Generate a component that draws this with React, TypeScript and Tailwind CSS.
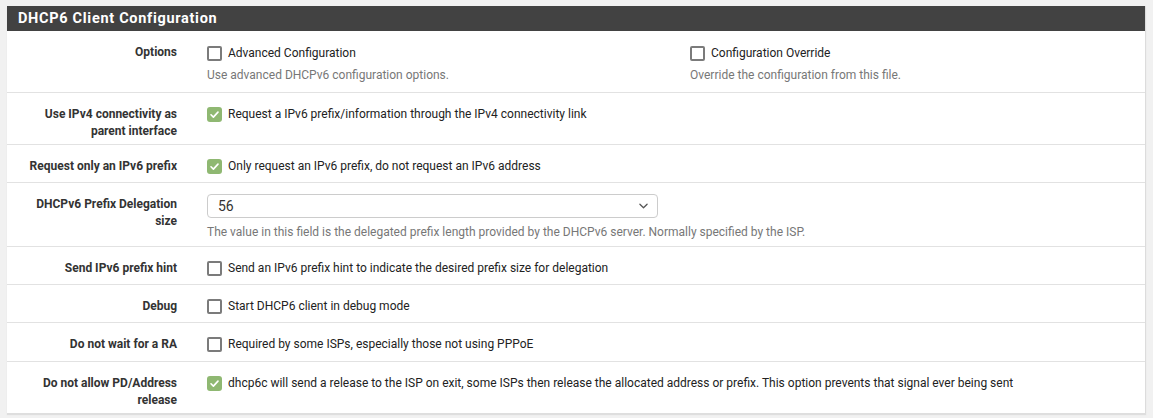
import React from 'react';

type Row = {
  label: string[];
  checked?: boolean;
  text?: string;
  tall?: boolean;
};

function Box({ checked }: { checked?: boolean }) {
  if (checked) {
    return (
      <span className="w-[15px] h-[15px] rounded-[3px] bg-[#8fb872] flex items-center justify-center shrink-0">
        <svg viewBox="0 0 12 12" className="w-[11px] h-[11px]" fill="none">
          <path d="M2.2 6.3L4.8 8.8L9.8 3.4" stroke="#ffffff" strokeWidth="1.8" strokeLinecap="round" strokeLinejoin="round" />
        </svg>
      </span>
    );
  }
  return <span className="w-[15px] h-[15px] rounded-[2px] border-2 border-[#7b7b7b] bg-white shrink-0" />;
}

function Label({ lines }: { lines: string[] }) {
  return (
    <div className="w-[185px] shrink-0 pr-[15px] pt-[13px] pb-[4px] text-right font-bold text-[12px] leading-[17px] text-[#333333]">
      {lines.map((l, i) => (
        <div key={i}>{l}</div>
      ))}
    </div>
  );
}

function CheckRow({ label, checked, text, tall }: Row) {
  return (
    <div className="flex items-start border-b border-[#e2e2e2]">
      <Label lines={label} />
      <div
        className={
          tall
            ? 'pl-[15px] pt-[13px] pb-[8px] flex items-center gap-[6px] text-[12px] leading-[17px] text-[#222222]'
            : 'pl-[15px] pt-[13px] pb-[7px] flex items-center gap-[6px] text-[12px] leading-[17px] text-[#222222]'
        }
      >
        <Box checked={checked} />
        <span>{text}</span>
      </div>
    </div>
  );
}

export default function App() {
  const rows: Row[] = [
    { label: ['Send IPv6 prefix hint'], text: 'Send an IPv6 prefix hint to indicate the desired prefix size for delegation' },
    { label: ['Debug'], text: 'Start DHCP6 client in debug mode' },
    { label: ['Do not wait for a RA'], text: 'Required by some ISPs, especially those not using PPPoE', tall: true },
  ];

  return (
    <div className="min-h-[418px] bg-[#f1f1f1] pt-[6px] px-[7px] font-['Roboto',sans-serif]">
      <div className="w-[1139px] bg-white border-r border-[#dcdcdc] shadow-[0_2px_1px_#dedede]">
        {/* Panel heading */}
        <div className="h-[25px] bg-[#424242] px-[11px] flex items-center text-white font-bold text-[14.5px] tracking-[0.7px]">
          DHCP6 Client Configuration
        </div>

        {/* Options */}
        <div className="flex items-start border-b border-[#e2e2e2]">
          <Label lines={['Options']} />
          <div className="flex pl-[15px] pt-[14px] pb-[8px] text-[12px] leading-[17px]">
            <div className="w-[483px]">
              <div className="flex items-center gap-[6px] text-[#222222]">
                <Box />
                <span>Advanced Configuration</span>
              </div>
              <div className="mt-[5px] text-[#777777]">Use advanced DHCPv6 configuration options.</div>
            </div>
            <div>
              <div className="flex items-center gap-[6px] text-[#222222]">
                <Box />
                <span>Configuration Override</span>
              </div>
              <div className="mt-[5px] text-[#777777]">Override the configuration from this file.</div>
            </div>
          </div>
        </div>

        <CheckRow
          label={['Use IPv4 connectivity as', 'parent interface']}
          checked
          text="Request a IPv6 prefix/information through the IPv4 connectivity link"
        />
        <CheckRow
          label={['Request only an IPv6 prefix']}
          checked
          text="Only request an IPv6 prefix, do not request an IPv6 address"
        />

        {/* Prefix delegation size */}
        <div className="flex items-start border-b border-[#e2e2e2]">
          <Label lines={['DHCPv6 Prefix Delegation', 'size']} />
          <div className="pl-[15px] pt-[11px] pb-[5px]">
            <div className="w-[451px] h-[24px] border border-[#cccccc] rounded-[4px] flex items-center justify-between pl-[10px] pr-[9px] text-[14px] text-[#333333]">
              <span>56</span>
              <svg viewBox="0 0 10 6" className="w-[9px] h-[6px]" fill="none">
                <path d="M1 1L5 5L9 1" stroke="#555555" strokeWidth="1.4" strokeLinecap="round" strokeLinejoin="round" />
              </svg>
            </div>
            <div className="mt-[6px] text-[12px] leading-[17px] text-[#777777]">
              The value in this field is the delegated prefix length provided by the DHCPv6 server. Normally specified by the ISP.
            </div>
          </div>
        </div>

        {rows.map((r, i) => (
          <CheckRow key={i} {...r} />
        ))}

        <div className="flex items-start">
          <Label lines={['Do not allow PD/Address', 'release']} />
          <div className="pl-[15px] pt-[13px] pb-[7px] flex items-center gap-[6px] text-[12px] leading-[17px] text-[#222222]">
            <Box checked />
            <span>
              dhcp6c will send a release to the ISP on exit, some ISPs then release the allocated address or prefix. This option prevents that signal ever being sent
            </span>
          </div>
        </div>
      </div>
    </div>
  );
}
